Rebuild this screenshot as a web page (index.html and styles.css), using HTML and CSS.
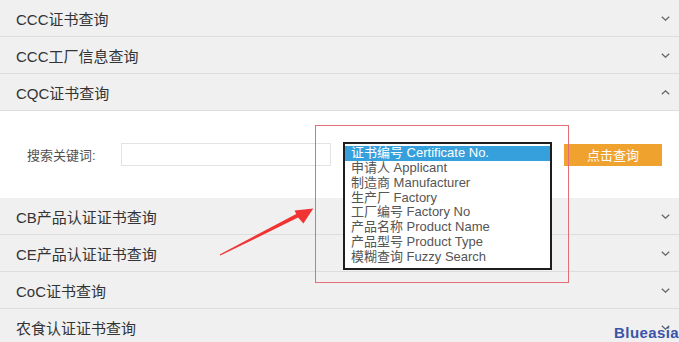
FILE: index.html
```html
<!DOCTYPE html>
<html lang="zh-CN">
<head>
<meta charset="utf-8">
<title>证书查询</title>
<link rel="stylesheet" href="styles.css">
</head>
<body>
<div class="page">
  <div class="acc">
    <div class="row"><span class="title">CCC证书查询</span><svg class="chev" width="9" height="5" viewBox="0 0 9 5"><path d="M0.8 0.8 L4.5 4.2 L8.2 0.8"/></svg></div>
    <div class="row"><span class="title">CCC工厂信息查询</span><svg class="chev" width="9" height="5" viewBox="0 0 9 5"><path d="M0.8 0.8 L4.5 4.2 L8.2 0.8"/></svg></div>
    <div class="row"><span class="title">CQC证书查询</span><svg class="chev" width="9" height="5" viewBox="0 0 9 5"><path d="M0.8 4.2 L4.5 0.8 L8.2 4.2"/></svg></div>
    <div class="panel">
      <span class="label">搜索关键词:</span>
      <div class="input"></div>
      <div class="select-wrap">
        <ul class="listbox">
          <li class="sel">证书编号 Certificate No.</li>
          <li>申请人 Applicant</li>
          <li>制造商 Manufacturer</li>
          <li>生产厂 Factory</li>
          <li>工厂编号 Factory No</li>
          <li>产品名称 Product Name</li>
          <li>产品型号 Product Type</li>
          <li>模糊查询 Fuzzy Search</li>
        </ul>
      </div>
      <div class="btn">点击查询</div>
    </div>
    <div class="row"><span class="title">CB产品认证证书查询</span><svg class="chev" width="9" height="5" viewBox="0 0 9 5"><path d="M0.8 0.8 L4.5 4.2 L8.2 0.8"/></svg></div>
    <div class="row"><span class="title">CE产品认证证书查询</span><svg class="chev" width="9" height="5" viewBox="0 0 9 5"><path d="M0.8 0.8 L4.5 4.2 L8.2 0.8"/></svg></div>
    <div class="row"><span class="title">CoC证书查询</span><svg class="chev" width="9" height="5" viewBox="0 0 9 5"><path d="M0.8 0.8 L4.5 4.2 L8.2 0.8"/></svg></div>
    <div class="row"><span class="title">农食认证证书查询</span><svg class="chev" width="9" height="5" viewBox="0 0 9 5"><path d="M0.8 0.8 L4.5 4.2 L8.2 0.8"/></svg></div>
  </div>
  <div class="mark-box"></div>
  <svg class="arrow" width="679" height="342" viewBox="0 0 679 342">
    <polygon points="219.7,254.4 296.2,214.0 294.6,210.6 313.3,208.6 303.4,223.4 298.1,217.6 220.3,255.6"/>
  </svg>
  <div class="watermark">Blueasia</div>
</div>
</body>
</html>
```
FILE: styles.css
```css
html, body {
  margin: 0;
  padding: 0;
  background: #ffffff;
}
.page {
  position: relative;
  width: 679px;
  height: 342px;
  overflow: hidden;
  font-family: "Liberation Sans", "Noto Sans CJK SC", sans-serif;
}
.acc {
  display: flex;
  flex-direction: column;
}
.row {
  flex: none;
  height: 36px;
  border-bottom: 1px solid #dddddd;
  background: #f0f0f0;
  display: flex;
  align-items: center;
  justify-content: space-between;
  padding: 0 9px 0 16px;
}
.title {
  font-size: 15px;
  color: #333333;
}
.chev path {
  fill: none;
  stroke: #666666;
  stroke-width: 1.3;
}
.panel {
  flex: none;
  height: 87px;
  background: #ffffff;
  display: flex;
  align-items: center;
  padding-left: 27px;
}
.label {
  width: 94px;
  font-size: 13px;
  color: #505050;
}
.input {
  width: 208px;
  height: 21px;
  border: 1px solid #e3e3e3;
  background: #ffffff;
}
.select-wrap {
  position: relative;
  width: 209px;
  height: 23px;
  margin-left: 12px;
}
.listbox {
  position: absolute;
  left: 0;
  top: -1px;
  width: 205px;
  margin: 0;
  padding: 2px 0 3px;
  list-style: none;
  border: 2px solid #1e1e1e;
  background: #ffffff;
  z-index: 2;
}
.listbox li {
  height: 14.85px;
  line-height: 14.85px;
  padding-left: 6px;
  font-size: 13px;
  color: #555555;
  white-space: nowrap;
}
.listbox li.sel {
  background: #35a0dc;
  color: #ffffff;
}
.btn {
  width: 98px;
  height: 22px;
  margin-left: 12px;
  background: #f0a22f;
  color: #ffffff;
  font-size: 13px;
  display: flex;
  align-items: center;
  justify-content: center;
}
.mark-box {
  position: absolute;
  left: 315px;
  top: 125px;
  width: 252px;
  height: 156px;
  border: 1px solid #e46d77;
  z-index: 3;
  pointer-events: none;
}
.arrow {
  position: absolute;
  left: 0;
  top: 0;
  z-index: 4;
  pointer-events: none;
}
.arrow polygon {
  fill: #f03434;
}
.watermark {
  position: absolute;
  right: 0;
  bottom: 1px;
  font-size: 15px;
  font-weight: bold;
  color: #3a55a8;
  letter-spacing: 0.4px;
  z-index: 5;
}
```
